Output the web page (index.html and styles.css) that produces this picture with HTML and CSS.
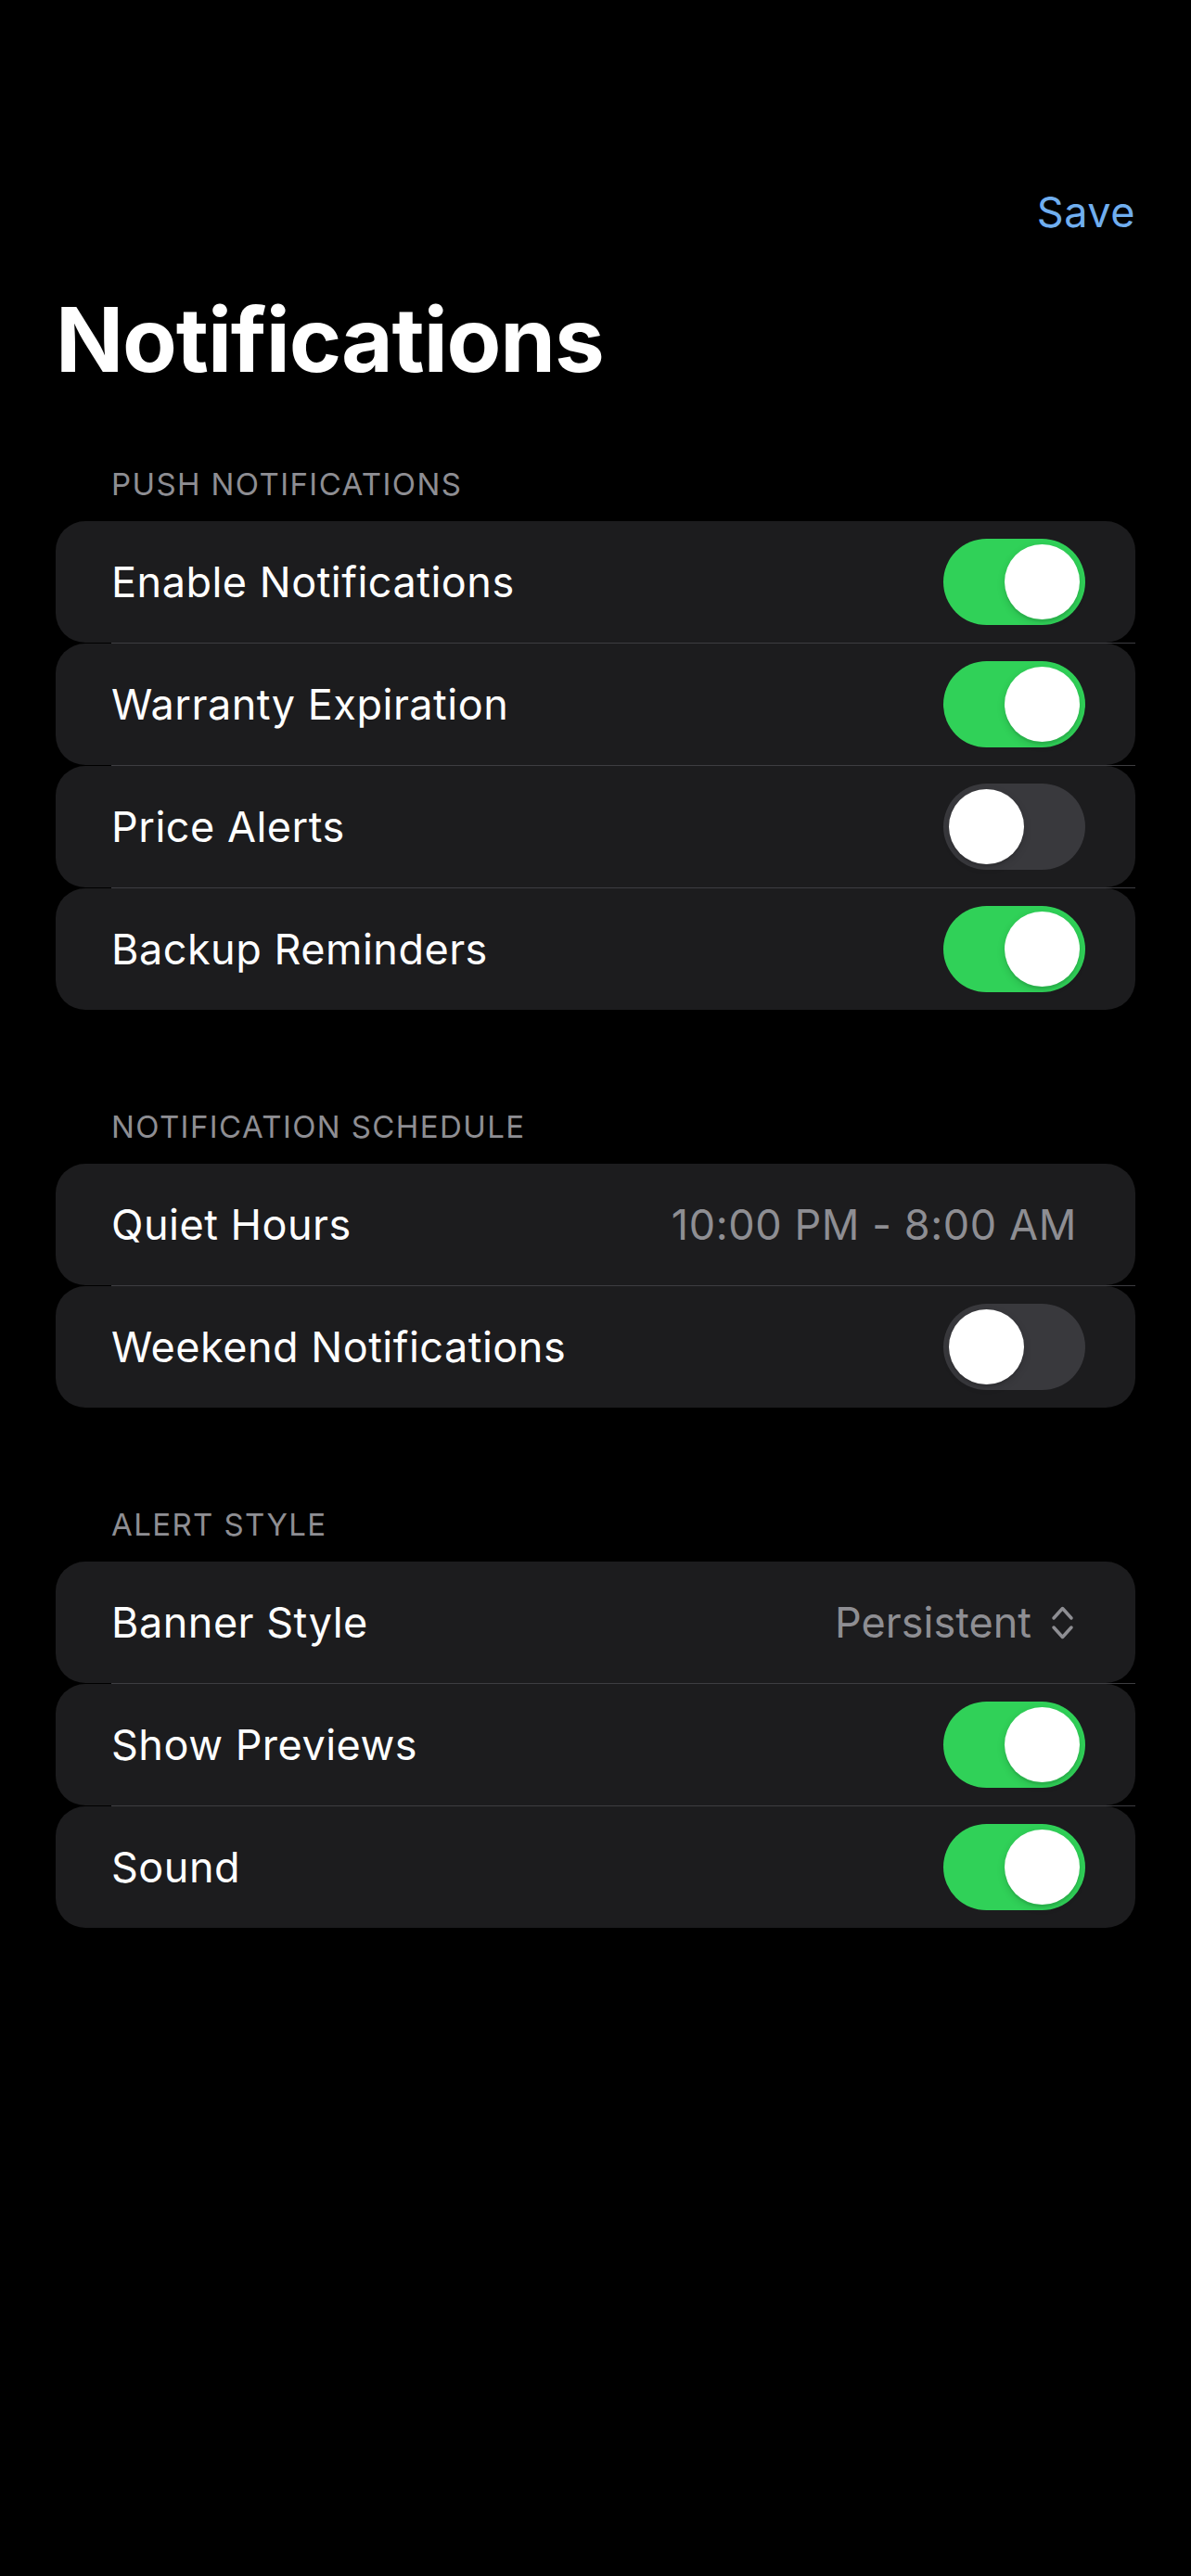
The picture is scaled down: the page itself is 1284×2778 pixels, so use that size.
FILE: index.html
```html
<!DOCTYPE html>
<html lang="en">
<head>
<meta charset="utf-8">
<title>Notifications</title>
<link rel="stylesheet" href="styles.css">
</head>
<body>
<div class="screen">
  <nav class="navbar">
    <span class="save">Save</span>
  </nav>
  <h1 class="title">Notifications</h1>

  <section class="section">
    <h2 class="section-header">PUSH NOTIFICATIONS</h2>
    <div class="group">
      <div class="row"><span class="label">Enable Notifications</span><span class="toggle on"><span class="knob"></span></span></div>
      <div class="sep"></div>
      <div class="row"><span class="label">Warranty Expiration</span><span class="toggle on"><span class="knob"></span></span></div>
      <div class="sep"></div>
      <div class="row"><span class="label">Price Alerts</span><span class="toggle"><span class="knob"></span></span></div>
      <div class="sep"></div>
      <div class="row"><span class="label">Backup Reminders</span><span class="toggle on"><span class="knob"></span></span></div>
    </div>
  </section>

  <section class="section">
    <h2 class="section-header">NOTIFICATION SCHEDULE</h2>
    <div class="group">
      <div class="row"><span class="label">Quiet Hours</span><span class="value">10:00 PM - 8:00 AM</span></div>
      <div class="sep"></div>
      <div class="row"><span class="label">Weekend Notifications</span><span class="toggle"><span class="knob"></span></span></div>
    </div>
  </section>

  <section class="section">
    <h2 class="section-header">ALERT STYLE</h2>
    <div class="group">
      <div class="row"><span class="label">Banner Style</span><span class="picker"><span class="picker-text">Persistent</span><svg class="chevrons" width="25" height="36" viewBox="0 0 25 36"><polyline points="3,13 12.5,2.5 22,13"/><polyline points="3,23 12.5,33.5 22,23"/></svg></span></div>
      <div class="sep"></div>
      <div class="row"><span class="label">Show Previews</span><span class="toggle on"><span class="knob"></span></span></div>
      <div class="sep"></div>
      <div class="row"><span class="label">Sound</span><span class="toggle on"><span class="knob"></span></span></div>
    </div>
  </section>
</div>
</body>
</html>
```

FILE: styles.css
```css
html, body {
  margin: 0;
  padding: 0;
  background: #000;
}

body {
  font-family: Inter, "Liberation Sans", sans-serif;
  color: #fff;
  min-height: 2778px;
}

.screen {
  padding: 202px 60px 0 60px;
}

.navbar {
  display: flex;
  justify-content: flex-end;
  height: 54px;
}

.save {
  font-size: 45px;
  line-height: 54px;
  color: #70aeef;
  letter-spacing: 0.5px;
}

.title {
  margin: 53px 0 0 0;
  font-size: 96px;
  line-height: 115px;
  font-weight: 700;
  letter-spacing: -1.1px;
}

.section {
  margin-top: 78px;
}

.section + .section {
  margin-top: 106px;
}

.section-header {
  margin: 0 0 20px 60px;
  font-size: 33px;
  line-height: 40px;
  font-weight: 400;
  color: #8e8e93;
  letter-spacing: 1.4px;
}

.group {
  display: flex;
  flex-direction: column;
}

.row {
  height: 131px;
  background: #1c1c1e;
  border-radius: 32px;
  display: flex;
  align-items: center;
  justify-content: space-between;
  padding: 0 54px 0 60px;
}

.sep {
  height: 1px;
  margin-left: 60px;
  background: #3d3d41;
}

.label {
  font-size: 45px;
  color: #fff;
  letter-spacing: 0.5px;
}

.value {
  font-size: 45px;
  color: #8e8e93;
  margin-right: 9px;
  letter-spacing: 0.6px;
}

.picker {
  display: flex;
  align-items: center;
  gap: 21px;
  margin-right: 12px;
}

.picker-text {
  font-size: 45px;
  color: #8e8e93;
}

.chevrons {
  display: block;
  fill: none;
  stroke: #8e8e93;
  stroke-width: 3.5;
  stroke-linecap: round;
  stroke-linejoin: round;
}

.toggle {
  position: relative;
  width: 153px;
  height: 93px;
  border-radius: 47px;
  background: #39393d;
  flex: none;
}

.toggle.on {
  background: #30d158;
}

.knob {
  position: absolute;
  top: 6px;
  left: 6px;
  width: 81px;
  height: 81px;
  border-radius: 50%;
  background: #fff;
  box-shadow: 0 3px 8px rgba(0, 0, 0, 0.15), 0 3px 1px rgba(0, 0, 0, 0.06);
}

.toggle.on .knob {
  left: 66px;
}
```
